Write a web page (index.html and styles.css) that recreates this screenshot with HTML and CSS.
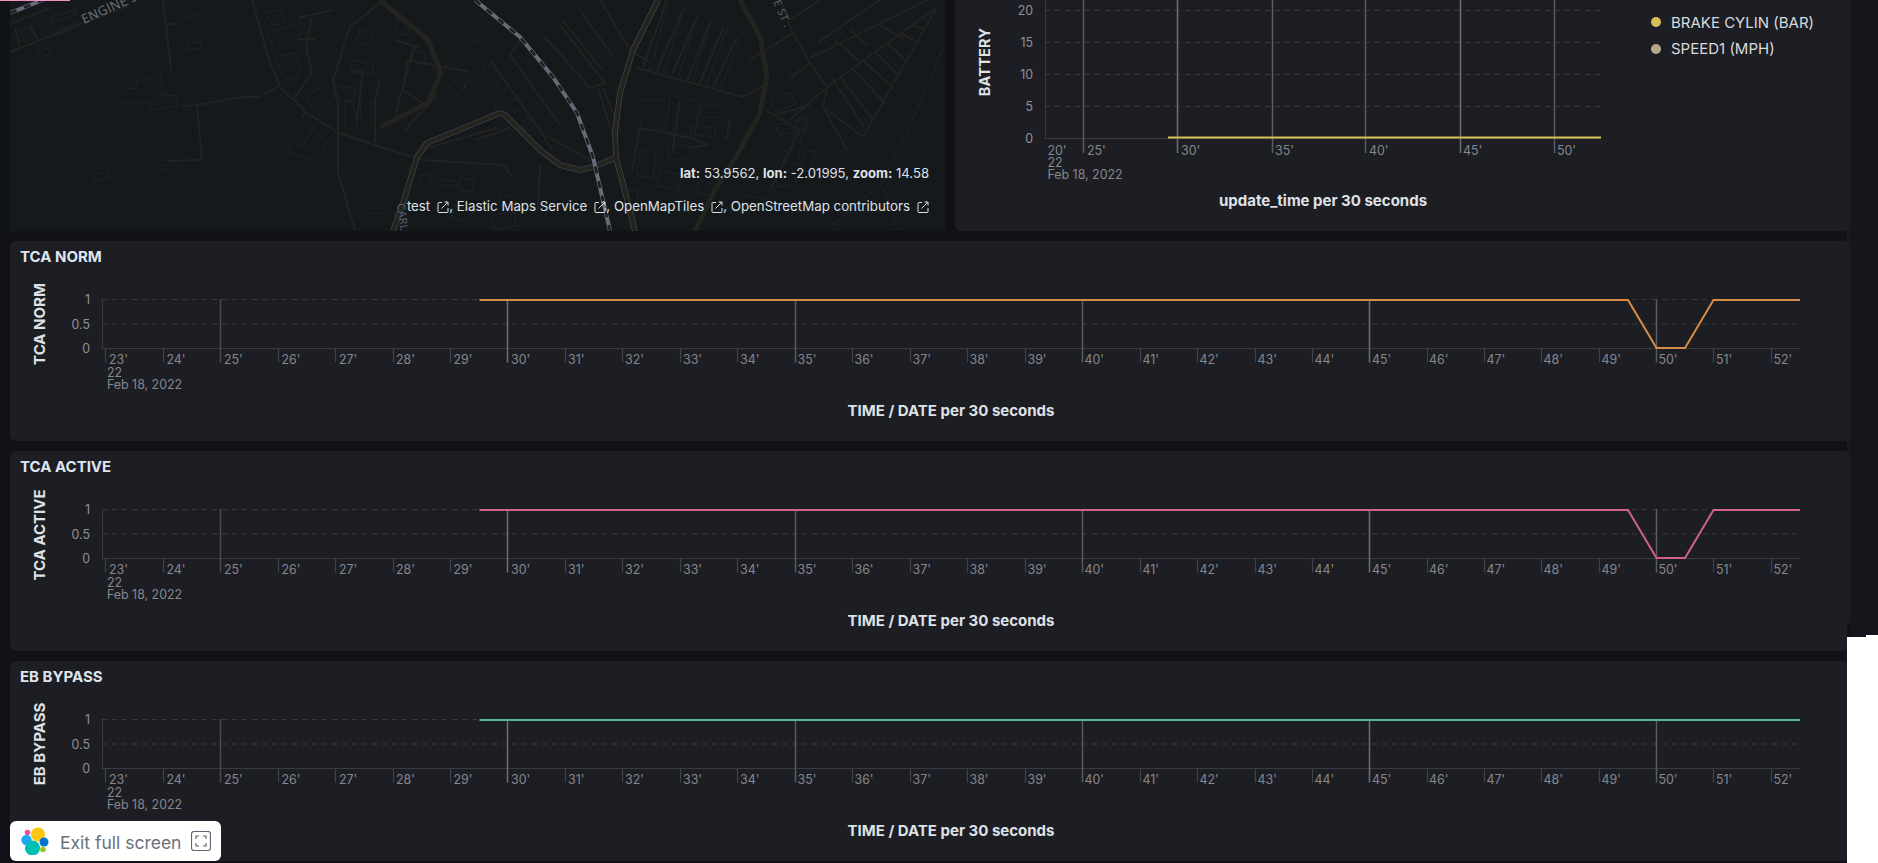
FILE: index.html
```html
<!DOCTYPE html>
<html lang="en">
<head>
<meta charset="utf-8">
<title>Dashboard</title>
<link rel="stylesheet" href="styles.css">
</head>
<body>
<div class="page">
  <div class="dash">
    <div class="top-row">
      <div class="map">
        <svg class="map-svg" width="935" height="231" viewBox="10 0 935 231">
          <g class="bldg">
            <path d="M122 88l14 1 1-8 10-2 14-6 1 22 15 1v10l-16 2-11 3-2-9-26 1zM94 175l14-4 1 5-14 5zM187 43l14-1v6l-14 2zM162 165h6v4h-6zM313 128l14 14-5 10-9 8-25-8 4-9 10 4zM305 100l13-12 12 12-2 7-8 8zM275 57l20-4 7 14-5 11-14 1zM267 33l35-10v10l-27 17zM265 13l15-3 5 13-12 2zM345 102h8l5 26h-13zM360 102h12v23h-10zM370 208h12v5h-12z"/>
            <path d="M20 30l12-5 4 12-12 5zM36 52l12-4 3 5-11 5zM50 18l26-9 1 5-26 9zM52 32l28-10 1 4-27 10zM200 14l-14 5M335 85l20 4-2 12-20-3zM352 60l22 5-2 10-22-3zM360 30l14 6-4 10-14-6z"/>
            <path d="M398 20l12 4-3 12-12-4zM412 50l14 4-3 10-14-4zM440 60l-8 8 8 8 8-8zM458 78l-8 8 8 8 8-8zM475 40l-7 8 8 7 7-8zM490 60l-8 8 8 8 8-8zM502 78l-7 7 8 8 7-8zM515 98l-7 7 7 8 8-8zM528 118l-7 7 8 7 7-7zM490 100l-7 7 8 7 7-7zM505 125l-7 7 7 8 8-8zM470 80l-6 6 7 8 6-7z"/>
            <path d="M420 175l10 1v8h-10zM440 180l16 1v5l-16-1zM460 178l14 2-2 12-14-2zM455 205l18 6-4 12-18-6zM500 195l16 3-1 10-16-3zM490 215l24-3 2 14-20 3zM540 205l8 6-5 8-8-6z"/>
            <path d="M640 100h24v30h-24zM670 95l30 8-6 35-28-6zM640 150l16 3-3 25-16-3zM668 145h20v14h-20zM660 170l22 5-4 16-22-5zM628 190l10 2-2 20-10-2zM700 105h20v12h-20zM692 125l24 3-2 9-24-3zM680 200l12 3-3 10-12-3zM700 180l14 4-3 12-14-4z"/>
            <path d="M770 100l20-8 6 12-20 8zM775 125l30-6 4 10-30 6zM785 150h14v14h-14zM775 175l18-3 3 12-18 3zM745 195l20 4-3 10-20-4zM800 115l8 3-8 24-8-3zM805 150l10 2-5 20-10-2z"/>
            <path d="M650 70L668 4M664 74L684 8M678 78L698 14M692 82L712 20M706 86L728 26M720 90L742 32"/>
          </g>
          <g class="road">
            <path d="M163 0L171 70M167 25L176 23M182 106L197 105L242 97L260 97L278 87M197 105L202 160L167 161M252 0L270 63L280 87L307 113L337 132L380 147L423 160L503 165L513 177"/>
            <path d="M338 133L338 173L355 230M333 80L338 100L338 133M333 80L350 27L380 3M312 18L306 47L312 73L293 100M298 18L333 10M298 39L315 39M302 118L306 110M357 120L363 72L353 70M375 143L375 100L380 80"/>
            <path d="M10 52L83 23L130 5M10 24L50 8M15 28L20 47M30 27L38 40"/>
            <path d="M407 60L470 72M407 60L403 90L430 108M437 95L405 130M415 45L395 115M395 40L420 48M490 60L540 130L552 150M522 38L510 55L560 125M545 135L590 160M540 165L538 210M497 128L420 150M475 140L510 128"/>
            <path d="M545 37L590 88L605 83L560 25M562 20L602 70M580 10L612 55M600 0L630 50L650 63M603 88L620 130M598 88L612 133"/>
            <path d="M637 68L743 97L765 85M643 67L667 0M657 70L683 10M672 75L697 17M687 80L710 23M700 83L723 28M713 87L737 37M640 128L690 138L708 145L690 148M640 128L632 170M680 100L672 155M730 120L726 140"/>
            <path d="M793 33L810 63L827 87L823 107L847 150M827 87L937 7M810 58L927 0M863 137L937 7M823 107L863 137M817 43L880 0M790 20L820 0M793 33L750 60M810 63L790 78M827 87L790 120M810 105L775 115M780 0L793 33"/>
            <path d="M840 77L873 120M852 68L885 103M863 60L893 88M875 52L900 77M887 43L908 63M900 33L920 43M912 25L927 30M832 78L864 127M880 25L905 40M850 30L868 45M835 40L860 62M765 110L800 130L770 190"/>
          </g>
          <path class="road-heavy" d="M740 0L760 37L767 77L760 113L740 150L715 190L695 231M380 0L428 40L441 73L428 103L380 127"/>
          <path class="road-faint" d="M943 48L927 87L897 153L882 183L897 230M882 183L830 227"/>
          <g class="casing">
            <path d="M393 231L405 197L417 157L427 143L500 113L505 115L540 150L560 165L580 170L593 167L617 157"/>
            <path d="M658 0L633 50L620 93L615 133L616 157L627 200L635 231"/>
          </g>
          <g class="casing-in">
            <path d="M393 231L405 197L417 157L427 143L500 113L505 115L540 150L560 165L580 170L593 167L617 157"/>
            <path d="M658 0L633 50L620 93L615 133L616 157L627 200L635 231"/>
          </g>
          <path class="rail" d="M475 0L520 37L553 77L577 113L593 157L610 231M10 13L43 0"/>
          <path class="rail-dash" d="M475 0L520 37L553 77L577 113L593 157L610 231M10 13L43 0"/>
          <text class="map-label" transform="rotate(-24 84 24)" x="84" y="24">ENGINE ST</text>
          <text class="map-label map-label-sm" transform="rotate(66 773 2)" x="773" y="2">E ST .</text>
          <text class="map-label map-label-sm" transform="rotate(82 397 204)" x="397" y="204">CARL</text>
        </svg>
        <div class="coords"><b>lat:</b> 53.9562, <b>lon:</b> -2.01995, <b>zoom:</b> 14.58</div>
        <div class="attribution">test<svg class="ext" width="12" height="12" viewBox="0 0 12 12"><path d="M5 1.5H2a1 1 0 0 0-1 1v8a1 1 0 0 0 1 1h8a1 1 0 0 0 1-1V7M4.5 7.5L11 1M7.5 1H11v3.5"/></svg>, Elastic Maps Service<svg class="ext" width="12" height="12" viewBox="0 0 12 12"><path d="M5 1.5H2a1 1 0 0 0-1 1v8a1 1 0 0 0 1 1h8a1 1 0 0 0 1-1V7M4.5 7.5L11 1M7.5 1H11v3.5"/></svg>, OpenMapTiles<svg class="ext" width="12" height="12" viewBox="0 0 12 12"><path d="M5 1.5H2a1 1 0 0 0-1 1v8a1 1 0 0 0 1 1h8a1 1 0 0 0 1-1V7M4.5 7.5L11 1M7.5 1H11v3.5"/></svg>, OpenStreetMap contributors<svg class="ext" width="12" height="12" viewBox="0 0 12 12"><path d="M5 1.5H2a1 1 0 0 0-1 1v8a1 1 0 0 0 1 1h8a1 1 0 0 0 1-1V7M4.5 7.5L11 1M7.5 1H11v3.5"/></svg></div>
      </div>
      <div class="battery">
        <svg class="chart-top" width="696" height="231" viewBox="955 0 696 231">
          <path class="axis" d="M1045.5 0V138M1045 138.5H1600"/>
          <path class="grid" d="M1045 10.5H1600M1045 42.5H1600M1045 74.5H1600M1045 106.5H1600"/>
          <path class="major-mid" d="M1083.5 0V153M1272.5 0V153M1365.5 0V153M1554.5 0V153"/>
          <path class="major-bright" d="M1177.5 0V153M1460.5 0V153"/>
          <path class="series series-yellow" d="M1168 137.5H1601"/>
          <text class="ytick" x="1033" y="14.5">20</text>
          <text class="ytick" x="1033" y="47">15</text>
          <text class="ytick" x="1033" y="79">10</text>
          <text class="ytick" x="1033" y="111">5</text>
          <text class="ytick" x="1033" y="142.5">0</text>
          <text class="xtick" y="154.5"><tspan x="1047.5">20'</tspan><tspan x="1087">25'</tspan><tspan x="1181">30'</tspan><tspan x="1275">35'</tspan><tspan x="1369">40'</tspan><tspan x="1463">45'</tspan><tspan x="1557">50'</tspan></text>
          <text class="xtick" x="1047.5" y="166.5">22</text>
          <text class="xtick" x="1047.5" y="179">Feb 18, 2022</text>
          <text class="vtitle vtitle-wide" transform="rotate(-90 984 62)" x="984" y="62">BATTERY</text>
          <text class="xtitle" x="1323" y="206">update_time per 30 seconds</text>
        </svg>
        <ul class="legend">
          <li class="legend-item"><span class="dot dot-yellow"></span>BRAKE CYLIN (BAR)</li>
          <li class="legend-item"><span class="dot dot-tan"></span>SPEED1 (MPH)</li>
        </ul>
      </div>
    </div>

    <section class="card">
      <h2 class="card-title">TCA NORM</h2>
      <svg class="chart" width="1840" height="168" viewBox="10 0 1840 168">
        <g id="frame">
          <path class="grid" d="M102 26.5H1800M102 51H1800"/>
          <path class="axis" d="M102.5 26V75.5M102 75.5H1800"/>
          <path class="minor" d="M105.5 76V89.5M163.5 76V89.5M278.5 76V89.5M335.5 76V89.5M393.5 76V89.5M450.5 76V89.5M565.5 76V89.5M622.5 76V89.5M680.5 76V89.5M737.5 76V89.5M852.5 76V89.5M910.5 76V89.5M967.5 76V89.5M1025.5 76V89.5M1140.5 76V89.5M1197.5 76V89.5M1255.5 76V89.5M1312.5 76V89.5M1427.5 76V89.5M1484.5 76V89.5M1541.5 76V89.5M1599.5 76V89.5M1713.5 76V89.5M1771.5 76V89.5"/>
          <path class="major-dim" d="M220.5 26V89.5"/>
          <path class="major-mid" d="M795.5 26V89.5M1082.5 26V89.5M1656.5 26V89.5"/>
          <path class="major-bright" d="M507.5 26V89.5M1369.5 26V89.5"/>
        </g>
        <path class="series series-orange" d="M479.5 27H1628L1656.5 75H1685L1713.5 27H1800"/>
        <text class="ytick" x="90" y="31">1</text>
        <text class="ytick" x="90" y="55.5">0.5</text>
        <text class="ytick" x="90" y="80">0</text>
        <text class="xtick" y="91"><tspan x="109">23'</tspan><tspan x="166.5">24'</tspan><tspan x="224">25'</tspan><tspan x="281.5">26'</tspan><tspan x="339">27'</tspan><tspan x="396">28'</tspan><tspan x="453.5">29'</tspan><tspan x="511">30'</tspan><tspan x="568">31'</tspan><tspan x="625">32'</tspan><tspan x="683">33'</tspan><tspan x="740">34'</tspan><tspan x="797.5">35'</tspan><tspan x="854.5">36'</tspan><tspan x="912.5">37'</tspan><tspan x="969.5">38'</tspan><tspan x="1027.5">39'</tspan><tspan x="1084.5">40'</tspan><tspan x="1142.5">41'</tspan><tspan x="1199.5">42'</tspan><tspan x="1257.5">43'</tspan><tspan x="1314.5">44'</tspan><tspan x="1372">45'</tspan><tspan x="1429">46'</tspan><tspan x="1486.5">47'</tspan><tspan x="1543.5">48'</tspan><tspan x="1601.5">49'</tspan><tspan x="1658.5">50'</tspan><tspan x="1716">51'</tspan><tspan x="1773.5">52'</tspan></text>
        <text class="xtick" x="107" y="103.5">22</text>
        <text class="xtick" x="107" y="116">Feb 18, 2022</text>
        <text class="vtitle" transform="rotate(-90 39.5 51)" x="39.5" y="51">TCA NORM</text>
        <text class="xtitle" x="951" y="143">TIME / DATE per 30 seconds</text>
      </svg>
    </section>

    <section class="card">
      <h2 class="card-title">TCA ACTIVE</h2>
      <svg class="chart" width="1840" height="168" viewBox="10 0 1840 168">
        <use href="#frame"></use>
        <path class="series series-pink" d="M479.5 27H1628L1656.5 75H1685L1713.5 27H1800"/>
        <text class="ytick" x="90" y="31">1</text>
        <text class="ytick" x="90" y="55.5">0.5</text>
        <text class="ytick" x="90" y="80">0</text>
        <text class="xtick" y="91"><tspan x="109">23'</tspan><tspan x="166.5">24'</tspan><tspan x="224">25'</tspan><tspan x="281.5">26'</tspan><tspan x="339">27'</tspan><tspan x="396">28'</tspan><tspan x="453.5">29'</tspan><tspan x="511">30'</tspan><tspan x="568">31'</tspan><tspan x="625">32'</tspan><tspan x="683">33'</tspan><tspan x="740">34'</tspan><tspan x="797.5">35'</tspan><tspan x="854.5">36'</tspan><tspan x="912.5">37'</tspan><tspan x="969.5">38'</tspan><tspan x="1027.5">39'</tspan><tspan x="1084.5">40'</tspan><tspan x="1142.5">41'</tspan><tspan x="1199.5">42'</tspan><tspan x="1257.5">43'</tspan><tspan x="1314.5">44'</tspan><tspan x="1372">45'</tspan><tspan x="1429">46'</tspan><tspan x="1486.5">47'</tspan><tspan x="1543.5">48'</tspan><tspan x="1601.5">49'</tspan><tspan x="1658.5">50'</tspan><tspan x="1716">51'</tspan><tspan x="1773.5">52'</tspan></text>
        <text class="xtick" x="107" y="103.5">22</text>
        <text class="xtick" x="107" y="116">Feb 18, 2022</text>
        <text class="vtitle" transform="rotate(-90 39.5 52)" x="39.5" y="52">TCA ACTIVE</text>
        <text class="xtitle" x="951" y="143">TIME / DATE per 30 seconds</text>
      </svg>
    </section>

    <section class="card">
      <h2 class="card-title">EB BYPASS</h2>
      <svg class="chart" width="1840" height="168" viewBox="10 0 1840 168">
        <use href="#frame"></use>
        <path class="series series-green" d="M479.5 27H1800"/>
        <text class="ytick" x="90" y="31">1</text>
        <text class="ytick" x="90" y="55.5">0.5</text>
        <text class="ytick" x="90" y="80">0</text>
        <text class="xtick" y="91"><tspan x="109">23'</tspan><tspan x="166.5">24'</tspan><tspan x="224">25'</tspan><tspan x="281.5">26'</tspan><tspan x="339">27'</tspan><tspan x="396">28'</tspan><tspan x="453.5">29'</tspan><tspan x="511">30'</tspan><tspan x="568">31'</tspan><tspan x="625">32'</tspan><tspan x="683">33'</tspan><tspan x="740">34'</tspan><tspan x="797.5">35'</tspan><tspan x="854.5">36'</tspan><tspan x="912.5">37'</tspan><tspan x="969.5">38'</tspan><tspan x="1027.5">39'</tspan><tspan x="1084.5">40'</tspan><tspan x="1142.5">41'</tspan><tspan x="1199.5">42'</tspan><tspan x="1257.5">43'</tspan><tspan x="1314.5">44'</tspan><tspan x="1372">45'</tspan><tspan x="1429">46'</tspan><tspan x="1486.5">47'</tspan><tspan x="1543.5">48'</tspan><tspan x="1601.5">49'</tspan><tspan x="1658.5">50'</tspan><tspan x="1716">51'</tspan><tspan x="1773.5">52'</tspan></text>
        <text class="xtick" x="107" y="103.5">22</text>
        <text class="xtick" x="107" y="116">Feb 18, 2022</text>
        <text class="vtitle" transform="rotate(-90 39.5 51)" x="39.5" y="51">EB BYPASS</text>
        <text class="xtitle" x="951" y="143">TIME / DATE per 30 seconds</text>
      </svg>
    </section>
  </div>

  <div class="pink-bar"></div>
  <div class="white-corner"></div>
  <button class="exit-btn" type="button">
    <svg class="logo" width="28" height="28" viewBox="0 0 28 28">
      <circle class="logo-pink" cx="6.5" cy="5.5" r="2.8"/>
      <circle class="logo-yellow" cx="17" cy="7.5" r="7"/>
      <circle class="logo-blue" cx="5.5" cy="13" r="5.2"/>
      <circle class="logo-dblue" cx="23" cy="15" r="4.5"/>
      <circle class="logo-teal" cx="11.5" cy="21" r="7.6"/>
      <circle class="logo-lime" cx="22" cy="22.5" r="2.8"/>
    </svg>
    <span class="exit-text">Exit full screen</span>
    <svg class="fs-icon" width="20" height="20" viewBox="0 0 20 20">
      <rect x="0.5" y="0.5" width="19" height="19" rx="2.5"/>
      <path d="M5 8V5h3M12 5h3v3M15 12v3h-3M8 15H5v-3"/>
    </svg>
  </button>
</div>
</body>
</html>
```

FILE: styles.css
```css
* { box-sizing: border-box; }
html, body { margin: 0; padding: 0; }
body { background: #15161b; font-family: "Inter", "Noto Sans", sans-serif; }

.page { position: relative; width: 1878px; height: 863px; overflow: hidden; background: #15161b; }
.dash {
  width: 1850px;
  height: 863px;
  padding-left: 10px;
  background: linear-gradient(to right, #111217 1847px, #1b1c21 1847px);
}

.top-row { display: flex; gap: 10px; height: 231px; margin-bottom: 10px; }

.map { position: relative; width: 935px; height: 231px; background: #15191c; overflow: hidden; }
.map-svg { display: block; }
.bldg path { fill: none; stroke: #22252a; stroke-width: 0.8; }
.road path { fill: none; stroke: #222220; stroke-width: 2; stroke-linejoin: round; }
.road-heavy { fill: none; stroke: #23231f; stroke-width: 5; stroke-linejoin: round; }
.road-faint { fill: none; stroke: #212220; stroke-width: 1.4; stroke-dasharray: 10 4; }
.casing path { fill: none; stroke: #494c53; stroke-width: 5.6; stroke-linejoin: round; }
.casing-in path { fill: none; stroke: #24241f; stroke-width: 4.4; stroke-linejoin: round; }
.rail { fill: none; stroke: #666b78; stroke-width: 4; stroke-linejoin: round; }
.rail-dash { fill: none; stroke: #1c1e22; stroke-width: 2.6; stroke-dasharray: 7 8; }
.map-label { font: 500 13px "Open Sans", "Inter", sans-serif; fill: #6d727c; letter-spacing: 0.3px; }
.map-label-sm { font-size: 11px; fill: #5f636c; }

.coords, .attribution {
  position: absolute;
  right: 16px;
  line-height: 16px;
  color: #dfe1e6;
  white-space: nowrap;
}
.coords { top: 165px; font-size: 13.1px; }
.coords b { font-weight: 700; }
.attribution { top: 198px; font-size: 13.3px; }
.ext { margin-left: 7px; vertical-align: -2px; }
.ext path { fill: none; stroke: #dfe1e6; stroke-width: 1; }

.battery { display: flex; width: 895px; height: 231px; background: #1d1e24; border-bottom-left-radius: 6px; border-bottom-right-radius: 6px; }
.chart-top { display: block; flex: none; }
.legend { list-style: none; margin: 12px 0 0; padding: 0; display: flex; flex-direction: column; gap: 6.5px; }
.legend-item { display: flex; align-items: center; height: 20px; gap: 10px; font-size: 15px; color: #d8dade; white-space: nowrap; }
.dot { width: 10px; height: 10px; border-radius: 50%; }
.dot-yellow { background: #d6bf57; }
.dot-tan { background: #b9a888; }

.card { width: 1840px; height: 200px; margin-bottom: 10px; background: #1d1e24; border-radius: 6px; overflow: hidden; }
.card-title { margin: 0; height: 32px; padding: 7px 0 0 10px; font-size: 15px; line-height: 18px; font-weight: 700; color: #dfe5ef; }
.chart { display: block; }

.grid { fill: none; stroke: #393a40; stroke-width: 1; stroke-dasharray: 5 5; }
.axis { fill: none; stroke: #3a3b41; stroke-width: 1; }
.minor { fill: none; stroke: #414248; stroke-width: 1.2; }
.major-dim { fill: none; stroke: #4a4b50; stroke-width: 1.5; }
.major-mid { fill: none; stroke: #5a5b60; stroke-width: 1.5; }
.major-bright { fill: none; stroke: #6e6f74; stroke-width: 1.5; }
.series { fill: none; stroke-width: 2; stroke-linejoin: miter; }
.series-yellow { stroke: #d6bf57; }
.series-orange { stroke: #da8b45; }
.series-pink { stroke: #d36086; }
.series-green { stroke: #54b399; }

.ytick { font-size: 12.4px; fill: #8f9197; text-anchor: end; }
.xtick { font-size: 12.4px; fill: #85878d; }
.vtitle { font-size: 15px; font-weight: 700; fill: #dfe1e6; text-anchor: middle; dominant-baseline: central; }
.vtitle-wide { font-size: 14.5px; letter-spacing: 0.2px; }
.xtitle { font-size: 15px; font-weight: 700; fill: #dfe1e6; text-anchor: middle; }

.pink-bar { position: absolute; left: 0; top: 0; width: 70px; height: 1px; background: #f48fc2; }

.white-corner { position: absolute; left: 1847px; top: 637px; width: 31px; height: 226px; background: #fff; }
.white-corner::before { content: ""; position: absolute; left: 0; top: -14px; width: 3px; height: 14px; background: #111217; }
.white-corner::after { content: ""; position: absolute; right: 0; top: -2px; width: 12px; height: 2px; background: #fff; }

.exit-btn {
  position: absolute;
  left: 10px;
  top: 821px;
  width: 211px;
  height: 40px;
  display: flex;
  align-items: center;
  padding: 0 10px 0 11px;
  border: 0;
  border-radius: 6px;
  background: #fff;
  font-family: inherit;
}
.logo { flex: none; }
.exit-text { margin-left: 11px; padding-top: 3px; font-size: 17.5px; line-height: 24px; color: #69707d; white-space: nowrap; }
.fs-icon { flex: none; margin-left: auto; }
.fs-icon rect, .fs-icon path { fill: none; stroke: #5f6673; stroke-width: 1.2; }
.logo-pink { fill: #f04e98; }
.logo-yellow { fill: #fec514; }
.logo-blue { fill: #1ba9f5; }
.logo-dblue { fill: #0077cc; }
.logo-teal { fill: #00bfb3; }
.logo-lime { fill: #93c90e; }
```
